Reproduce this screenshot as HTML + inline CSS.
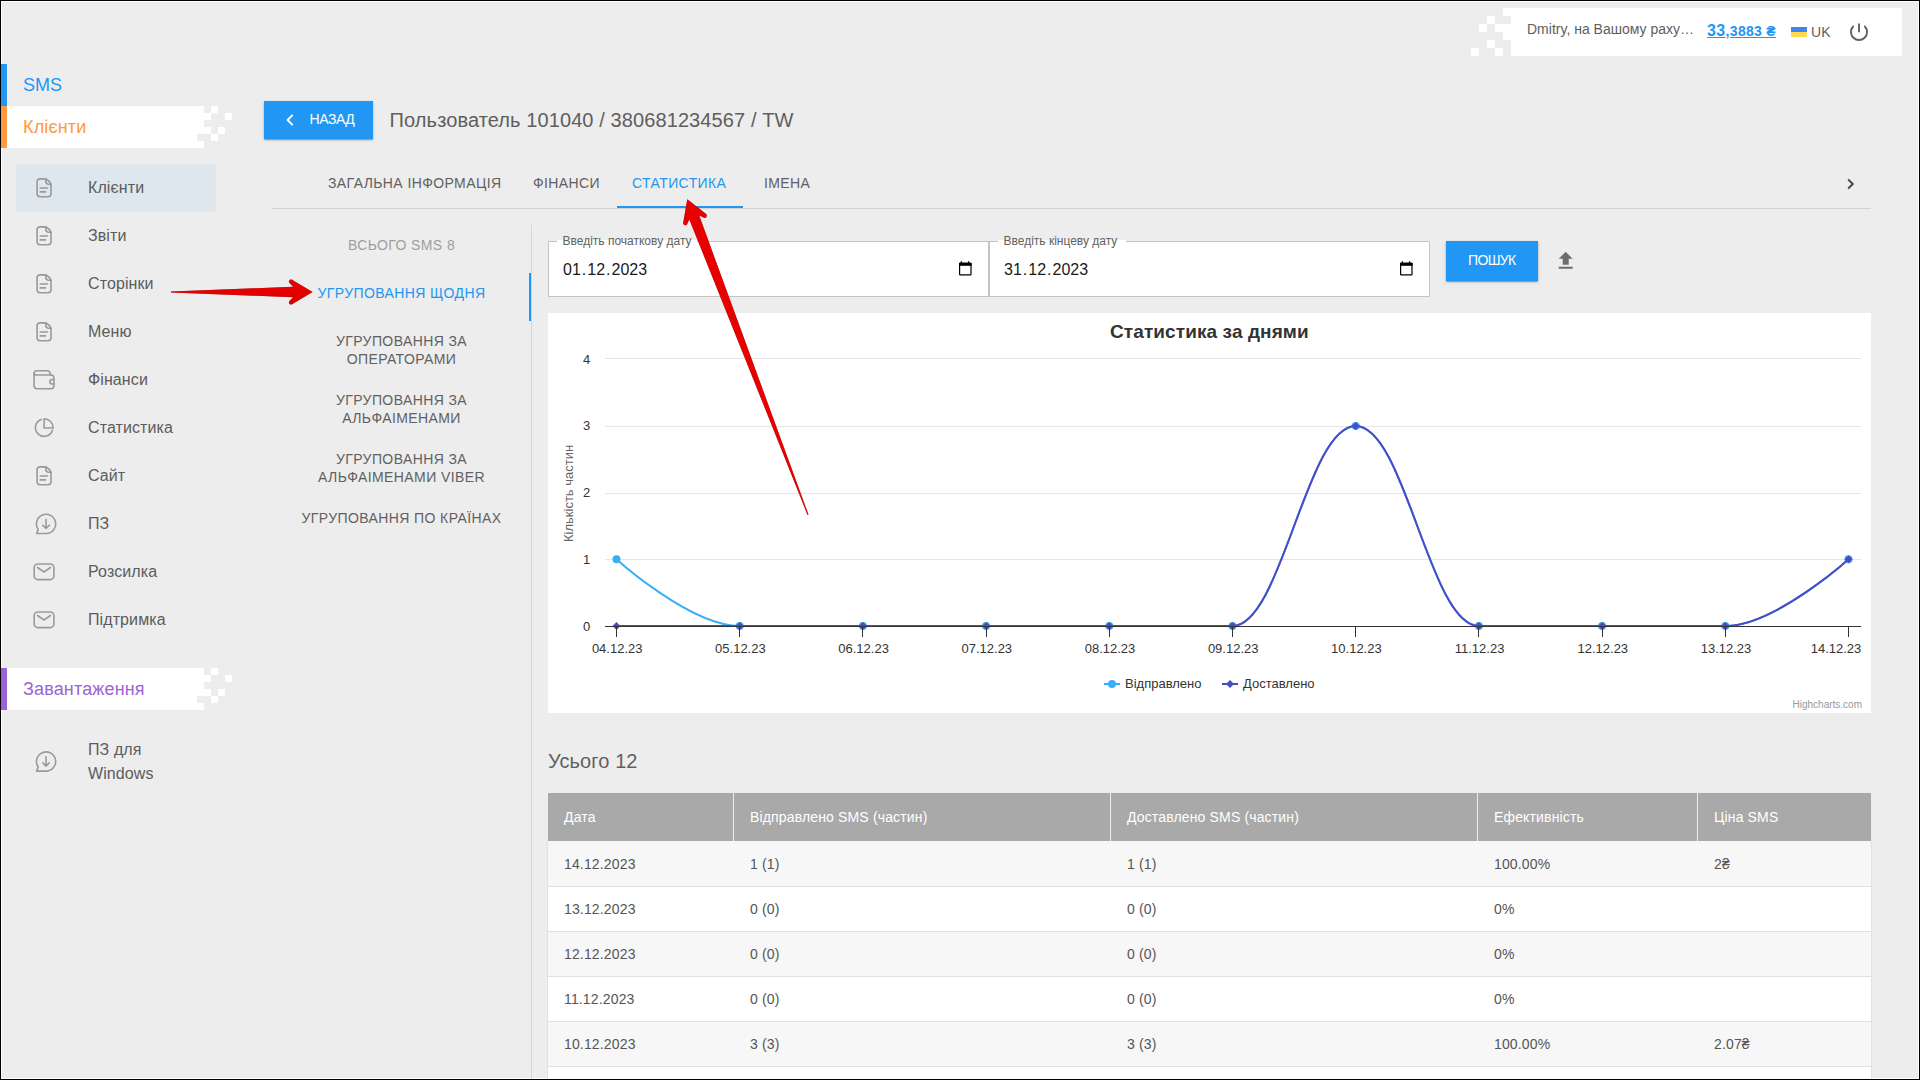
<!DOCTYPE html>
<html>
<head>
<meta charset="utf-8">
<style>
html,body{margin:0;padding:0;}
body{width:1920px;height:1080px;position:relative;overflow:hidden;background:#ededed;font-family:"Liberation Sans",sans-serif;color:#555;}
.a{position:absolute;}
.t{position:absolute;white-space:nowrap;line-height:1;}
#frame{position:absolute;left:0;top:0;width:1920px;height:1080px;box-sizing:border-box;border:1px solid #000;z-index:100;}
#wline{position:absolute;left:1px;top:1px;width:1918px;height:1078px;box-sizing:border-box;border:1px solid #fff;}
svg{position:absolute;overflow:visible;}
</style>
</head>
<body>
<div id="wline"></div>

<div class="a" style="left:1511px;top:8px;width:391px;height:48px;background:#fff;"></div>
<div class="a" style="left:1503px;top:8px;width:8px;height:8px;background:#fff;"></div>
<div class="a" style="left:1487px;top:16px;width:8px;height:8px;background:#fff;"></div>
<div class="a" style="left:1479px;top:24px;width:8px;height:8px;background:#fff;"></div>
<div class="a" style="left:1495px;top:24px;width:16px;height:8px;background:#fff;"></div>
<div class="a" style="left:1503px;top:32px;width:8px;height:8px;background:#fff;"></div>
<div class="a" style="left:1487px;top:40px;width:8px;height:8px;background:#fff;"></div>
<div class="a" style="left:1471px;top:48px;width:8px;height:8px;background:#fff;"></div>
<div class="a" style="left:1495px;top:48px;width:8px;height:8px;background:#fff;"></div>
<div class="t" style="left:1527px;top:22.15px;font-size:14px;color:#5e5e5e;">Dmitry, на Вашому раху…</div>
<div class="t" style="left:1707px;top:22.96px;color:#2196f3;font-weight:700;text-decoration:underline;"><span style="font-size:16px;letter-spacing:0.4px">33</span><span style="font-size:14px;letter-spacing:0.3px">,3883 ₴</span></div>
<div class="a" style="left:1791px;top:27px;width:16px;height:5px;background:#3f86f2;"></div>
<div class="a" style="left:1791px;top:32px;width:16px;height:5px;background:#ffd84c;"></div>
<div class="t" style="left:1811px;top:25.15px;font-size:14px;color:#5e5e5e;letter-spacing:0.2px;">UK</div>
<svg style="left:0;top:0" width="1920" height="80"><path d="M1853.1 26.5 A8.03 8.03 0 1 0 1864.9 26.5" fill="none" stroke="#616161" stroke-width="1.9" stroke-linecap="round"/><path d="M1859 24.2 V31.5" stroke="#616161" stroke-width="1.9" stroke-linecap="round"/></svg>
<div class="a" style="left:1px;top:64px;width:6px;height:42px;background:#2196f3;"></div>
<div class="t" style="left:23px;top:76.16px;font-size:18px;color:#2196f3;">SMS</div>
<div class="a" style="left:1px;top:106px;width:6px;height:42px;background:#ff9a40;"></div>
<div class="a" style="left:7px;top:106px;width:183px;height:42px;background:#fff;"></div>
<div class="a" style="left:190px;top:106px;width:14px;height:7px;background:#fff;"></div>
<div class="a" style="left:211px;top:106px;width:7px;height:7px;background:#fff;"></div>
<div class="a" style="left:190px;top:113px;width:21px;height:7px;background:#fff;"></div>
<div class="a" style="left:225px;top:113px;width:7px;height:7px;background:#fff;"></div>
<div class="a" style="left:190px;top:120px;width:14px;height:7px;background:#fff;"></div>
<div class="a" style="left:190px;top:127px;width:21px;height:7px;background:#fff;"></div>
<div class="a" style="left:218px;top:127px;width:7px;height:7px;background:#fff;"></div>
<div class="a" style="left:190px;top:134px;width:7px;height:7px;background:#fff;"></div>
<div class="a" style="left:211px;top:134px;width:7px;height:7px;background:#fff;"></div>
<div class="a" style="left:190px;top:141px;width:14px;height:7px;background:#fff;"></div>
<div class="t" style="left:23px;top:118.06px;font-size:18px;color:#ff9a40;letter-spacing:0.15px;">Клієнти</div>
<div class="a" style="left:16px;top:164px;width:200px;height:48px;background:#dfe7ee;"></div>
<div class="t" style="left:88px;top:179.66px;font-size:16px;color:#5c5c5c;letter-spacing:0.1px;">Клієнти</div>
<div class="t" style="left:88px;top:227.66px;font-size:16px;color:#5c5c5c;letter-spacing:0.1px;">Звіти</div>
<div class="t" style="left:88px;top:275.66px;font-size:16px;color:#5c5c5c;letter-spacing:0.1px;">Сторінки</div>
<div class="t" style="left:88px;top:323.66px;font-size:16px;color:#5c5c5c;letter-spacing:0.1px;">Меню</div>
<div class="t" style="left:88px;top:371.66px;font-size:16px;color:#5c5c5c;letter-spacing:0.1px;">Фінанси</div>
<div class="t" style="left:88px;top:419.66px;font-size:16px;color:#5c5c5c;letter-spacing:0.1px;">Статистика</div>
<div class="t" style="left:88px;top:467.66px;font-size:16px;color:#5c5c5c;letter-spacing:0.1px;">Сайт</div>
<div class="t" style="left:88px;top:515.66px;font-size:16px;color:#5c5c5c;letter-spacing:0.1px;">ПЗ</div>
<div class="t" style="left:88px;top:563.66px;font-size:16px;color:#5c5c5c;letter-spacing:0.1px;">Розсилка</div>
<div class="t" style="left:88px;top:611.66px;font-size:16px;color:#5c5c5c;letter-spacing:0.1px;">Підтримка</div>
<div class="a" style="left:1px;top:668px;width:6px;height:42px;background:#9c64d2;"></div>
<div class="a" style="left:7px;top:668px;width:183px;height:42px;background:#fff;"></div>
<div class="a" style="left:190px;top:668px;width:14px;height:7px;background:#fff;"></div>
<div class="a" style="left:211px;top:668px;width:7px;height:7px;background:#fff;"></div>
<div class="a" style="left:190px;top:675px;width:21px;height:7px;background:#fff;"></div>
<div class="a" style="left:225px;top:675px;width:7px;height:7px;background:#fff;"></div>
<div class="a" style="left:190px;top:682px;width:14px;height:7px;background:#fff;"></div>
<div class="a" style="left:190px;top:689px;width:21px;height:7px;background:#fff;"></div>
<div class="a" style="left:218px;top:689px;width:7px;height:7px;background:#fff;"></div>
<div class="a" style="left:190px;top:696px;width:7px;height:7px;background:#fff;"></div>
<div class="a" style="left:211px;top:696px;width:7px;height:7px;background:#fff;"></div>
<div class="a" style="left:190px;top:703px;width:14px;height:7px;background:#fff;"></div>
<div class="t" style="left:23px;top:680.06px;font-size:18px;color:#9c64d2;letter-spacing:0.15px;">Завантаження</div>
<div class="t" style="left:88px;top:742.26px;font-size:16px;color:#5c5c5c;letter-spacing:0.1px;">ПЗ для</div>
<div class="t" style="left:88px;top:766.26px;font-size:16px;color:#5c5c5c;letter-spacing:0.1px;">Windows</div>
<svg style="left:0;top:0" width="240" height="800"><g transform="translate(36 178)" fill="none" stroke="#9a9a9a" stroke-width="1.6" stroke-linecap="round" stroke-linejoin="round"><path d="M9.8 0.9 H4 Q1.1 0.9 1.1 3.8 V15.8 Q1.1 18.7 4 18.7 H12.1 Q15 18.7 15 15.8 V6.2 A9 9 0 0 0 9.8 0.9 Z"/><path d="M9.8 0.9 V3.2 A3 3 0 0 0 12.8 6.2 H15"/><path d="M4.3 10 H11.4 M4.3 13.9 H9.6"/></g><g transform="translate(36 226)" fill="none" stroke="#9a9a9a" stroke-width="1.6" stroke-linecap="round" stroke-linejoin="round"><path d="M9.8 0.9 H4 Q1.1 0.9 1.1 3.8 V15.8 Q1.1 18.7 4 18.7 H12.1 Q15 18.7 15 15.8 V6.2 A9 9 0 0 0 9.8 0.9 Z"/><path d="M9.8 0.9 V3.2 A3 3 0 0 0 12.8 6.2 H15"/><path d="M4.3 10 H11.4 M4.3 13.9 H9.6"/></g><g transform="translate(36 274)" fill="none" stroke="#9a9a9a" stroke-width="1.6" stroke-linecap="round" stroke-linejoin="round"><path d="M9.8 0.9 H4 Q1.1 0.9 1.1 3.8 V15.8 Q1.1 18.7 4 18.7 H12.1 Q15 18.7 15 15.8 V6.2 A9 9 0 0 0 9.8 0.9 Z"/><path d="M9.8 0.9 V3.2 A3 3 0 0 0 12.8 6.2 H15"/><path d="M4.3 10 H11.4 M4.3 13.9 H9.6"/></g><g transform="translate(36 322)" fill="none" stroke="#9a9a9a" stroke-width="1.6" stroke-linecap="round" stroke-linejoin="round"><path d="M9.8 0.9 H4 Q1.1 0.9 1.1 3.8 V15.8 Q1.1 18.7 4 18.7 H12.1 Q15 18.7 15 15.8 V6.2 A9 9 0 0 0 9.8 0.9 Z"/><path d="M9.8 0.9 V3.2 A3 3 0 0 0 12.8 6.2 H15"/><path d="M4.3 10 H11.4 M4.3 13.9 H9.6"/></g><g transform="translate(33 370)" fill="none" stroke="#9a9a9a" stroke-width="1.6" stroke-linecap="round" stroke-linejoin="round"><path d="M1.1 5.5 V3.6 Q1.1 0.8 3.9 0.8 H14.2 Q16.6 0.8 17.1 3.2 L17.4 5"/><path d="M1.1 4 V15.8 Q1.1 18.7 4 18.7 H18 Q20.9 18.7 20.9 15.8 V8 Q20.9 5 18 5 H3.6 Q1.1 5 1.1 3.5"/><path d="M20.9 9.6 H19 A2.2 2.2 0 0 0 19 14 H20.9"/></g><g transform="translate(34 418)" fill="none" stroke="#9a9a9a" stroke-width="1.6" stroke-linecap="round" stroke-linejoin="round"><path d="M7.3 1.4 A8.7 8.7 0 1 0 18.4 12.2"/><path d="M10.1 0.8 V10 H19.2 A9.2 9.2 0 0 0 10.1 0.8 Z"/></g><g transform="translate(36 466)" fill="none" stroke="#9a9a9a" stroke-width="1.6" stroke-linecap="round" stroke-linejoin="round"><path d="M9.8 0.9 H4 Q1.1 0.9 1.1 3.8 V15.8 Q1.1 18.7 4 18.7 H12.1 Q15 18.7 15 15.8 V6.2 A9 9 0 0 0 9.8 0.9 Z"/><path d="M9.8 0.9 V3.2 A3 3 0 0 0 12.8 6.2 H15"/><path d="M4.3 10 H11.4 M4.3 13.9 H9.6"/></g><g transform="translate(35.6 513.8)" fill="none" stroke="#9a9a9a" stroke-width="1.6" stroke-linecap="round" stroke-linejoin="round"><path d="M10.4 19.7 H1 L2.6 15.6 A9.6 9.6 0 1 1 10.4 19.7 Z"/><path d="M10.4 5.4 V14.6 M7.1 11.4 L10.4 14.7 L13.7 11.4"/></g><g transform="translate(33.4 563.2)" fill="none" stroke="#9a9a9a" stroke-width="1.6" stroke-linecap="round" stroke-linejoin="round"><rect x="0.8" y="0.8" width="19.7" height="15.6" rx="3.6"/><path d="M4.1 4.3 L10.6 8.8 L17.1 4.3"/></g><g transform="translate(33.4 611.2)" fill="none" stroke="#9a9a9a" stroke-width="1.6" stroke-linecap="round" stroke-linejoin="round"><rect x="0.8" y="0.8" width="19.7" height="15.6" rx="3.6"/><path d="M4.1 4.3 L10.6 8.8 L17.1 4.3"/></g><g transform="translate(35.6 751.4)" fill="none" stroke="#9a9a9a" stroke-width="1.6" stroke-linecap="round" stroke-linejoin="round"><path d="M10.4 19.7 H1 L2.6 15.6 A9.6 9.6 0 1 1 10.4 19.7 Z"/><path d="M10.4 5.4 V14.6 M7.1 11.4 L10.4 14.7 L13.7 11.4"/></g></svg>
<div class="a" style="left:264px;top:101px;width:109px;height:38px;background:#2196f3;box-shadow:0 1px 3px rgba(0,0,0,.2),0 1px 1px rgba(0,0,0,.14),0 2px 1px -1px rgba(0,0,0,.12);"></div>
<svg style="left:0;top:0" width="400" height="150"><path d="M292 115.5 L287.6 120 L292 124.5" fill="none" stroke="#fff" stroke-width="1.9" stroke-linecap="square"/></svg>
<div class="t" style="left:309.5px;top:112.15px;font-size:14px;color:#fff;letter-spacing:-0.45px;">НАЗАД</div>
<div class="t" style="left:389.6px;top:110.07px;font-size:20px;color:#5e5e5e;letter-spacing:0.1px;">Пользователь 101040 / 380681234567 / TW</div>
<div class="t" style="left:328px;top:176.15px;font-size:14px;color:#616161;letter-spacing:0.4px;">ЗАГАЛЬНА ІНФОРМАЦІЯ</div>
<div class="t" style="left:533px;top:176.15px;font-size:14px;color:#616161;letter-spacing:0.4px;">ФІНАНСИ</div>
<div class="t" style="left:632px;top:176.15px;font-size:14px;color:#2196f3;letter-spacing:0.4px;">СТАТИСТИКА</div>
<div class="t" style="left:764px;top:176.15px;font-size:14px;color:#616161;letter-spacing:0.4px;">ІМЕНА</div>
<div class="a" style="left:272px;top:208px;width:1599px;height:1px;background:#d3d3d3;"></div>
<div class="a" style="left:617px;top:206px;width:126px;height:2px;background:#2196f3;"></div>
<svg style="left:0;top:0" width="1900" height="220"><path d="M1848.9 180.2 L1852.8 184 L1848.9 187.8" fill="none" stroke="#444" stroke-width="1.9" stroke-linecap="square"/></svg>
<div class="a" style="left:531px;top:225px;width:1px;height:855px;background:#d6d6d6;"></div>
<div class="a" style="left:529px;top:273px;width:2px;height:48px;background:#2196f3;"></div>
<div class="t" style="left:201.50px;width:400px;text-align:center;top:238.15px;font-size:14px;color:#9e9e9e;letter-spacing:0.4px;">ВСЬОГО SMS 8</div>
<div class="t" style="left:201.50px;width:400px;text-align:center;top:286.15px;font-size:14px;color:#2196f3;letter-spacing:0.4px;">УГРУПОВАННЯ ЩОДНЯ</div>
<div class="t" style="left:201.50px;width:400px;text-align:center;top:333.85px;font-size:14px;color:#616161;letter-spacing:0.4px;">УГРУПОВАННЯ ЗА</div>
<div class="t" style="left:201.50px;width:400px;text-align:center;top:352.15px;font-size:14px;color:#616161;letter-spacing:0.4px;">ОПЕРАТОРАМИ</div>
<div class="t" style="left:201.50px;width:400px;text-align:center;top:393.15px;font-size:14px;color:#616161;letter-spacing:0.4px;">УГРУПОВАННЯ ЗА</div>
<div class="t" style="left:201.50px;width:400px;text-align:center;top:411.15px;font-size:14px;color:#616161;letter-spacing:0.4px;">АЛЬФАІМЕНАМИ</div>
<div class="t" style="left:201.50px;width:400px;text-align:center;top:452.35px;font-size:14px;color:#616161;letter-spacing:0.4px;">УГРУПОВАННЯ ЗА</div>
<div class="t" style="left:201.50px;width:400px;text-align:center;top:470.15px;font-size:14px;color:#616161;letter-spacing:0.4px;">АЛЬФАІМЕНАМИ VIBER</div>
<div class="t" style="left:201.50px;width:400px;text-align:center;top:511.15px;font-size:14px;color:#616161;letter-spacing:0.4px;">УГРУПОВАННЯ ПО КРАЇНАХ</div>
<div class="a" style="left:548px;top:241px;width:441px;height:56px;box-sizing:border-box;background:#fff;border:1px solid #c4c4c4;"></div>
<div class="a" style="left:557px;top:240px;width:140px;height:3px;background:#fff;"></div>
<div class="t" style="left:562.5px;top:234.84px;font-size:12px;color:#616161;">Введіть початкову дату</div>
<div class="t" style="left:562px;top:262.46px;font-size:16px;color:#1a1a1a;"><span style="padding:0 1px">01</span>.<span style="padding:0 1px">12</span>.<span style="padding:0 1px">2023</span></div>
<div class="a" style="left:989px;top:241px;width:441px;height:56px;box-sizing:border-box;background:#fff;border:1px solid #c4c4c4;"></div>
<div class="a" style="left:998px;top:240px;width:128px;height:3px;background:#fff;"></div>
<div class="t" style="left:1003.5px;top:234.84px;font-size:12px;color:#616161;">Введіть кінцеву дату</div>
<div class="t" style="left:1003px;top:262.46px;font-size:16px;color:#1a1a1a;"><span style="padding:0 1px">31</span>.<span style="padding:0 1px">12</span>.<span style="padding:0 1px">2023</span></div>
<svg style="left:0;top:0" width="1600" height="300"><g transform="translate(959 261)"><path d="M0.6 2.6 Q0.6 2 1.2 2 H11.4 Q12 2 12 2.6 V13.2 Q12 13.8 11.4 13.8 H1.2 Q0.6 13.8 0.6 13.2 Z" fill="none" stroke="#000" stroke-width="1.2"/><rect x="0" y="2" width="12.6" height="2.8" fill="#000"/><path d="M2.3 0.2 V2.4 M9.6 0.2 V2.4" stroke="#000" stroke-width="1.2"/></g><g transform="translate(1400 261)"><path d="M0.6 2.6 Q0.6 2 1.2 2 H11.4 Q12 2 12 2.6 V13.2 Q12 13.8 11.4 13.8 H1.2 Q0.6 13.8 0.6 13.2 Z" fill="none" stroke="#000" stroke-width="1.2"/><rect x="0" y="2" width="12.6" height="2.8" fill="#000"/><path d="M2.3 0.2 V2.4 M9.6 0.2 V2.4" stroke="#000" stroke-width="1.2"/></g><path transform="translate(1553.7 248.85)" d="M5 20h14v-2H5v2zm0-10h4v6h6v-6h4l-7-7-7 7z" fill="#6d6d6d"/></svg>
<div class="a" style="left:1446px;top:241px;width:92px;height:40px;background:#2196f3;box-shadow:0 1px 3px rgba(0,0,0,.2),0 1px 1px rgba(0,0,0,.14),0 2px 1px -1px rgba(0,0,0,.12);"></div>
<div class="t" style="left:1468px;top:253.15px;font-size:14px;color:#fff;letter-spacing:-0.65px;">ПОШУК</div>
<div class="a" style="left:548px;top:313px;width:1323px;height:400px;background:#fff;"></div>
<svg style="left:0;top:0" width="1920" height="1080"><rect x="605" y="358" width="1256" height="1" fill="#e6e6e6"/><rect x="605" y="426" width="1256" height="1" fill="#e6e6e6"/><rect x="605" y="493" width="1256" height="1" fill="#e6e6e6"/><rect x="605" y="559" width="1256" height="1" fill="#e6e6e6"/><path d="M 616.50 559.30 C 616.50 559.30 690.42 626.00 739.70 626.00 C 788.98 626.00 813.62 626.00 862.90 626.00 C 912.18 626.00 936.82 626.00 986.10 626.00 C 1035.38 626.00 1060.02 626.00 1109.30 626.00 C 1158.58 626.00 1183.22 626.00 1232.50 626.00 C 1281.78 626.00 1306.42 426.00 1355.70 426.00 C 1404.98 426.00 1429.62 626.00 1478.90 626.00 C 1528.18 626.00 1552.82 626.00 1602.10 626.00 C 1651.38 626.00 1676.02 626.00 1725.30 626.00 C 1774.58 626.00 1848.50 559.30 1848.50 559.30" fill="none" stroke="#3aaef8" stroke-width="2" stroke-linejoin="round" stroke-linecap="round"/><circle cx="616.50" cy="559.30" r="4" fill="#3aaef8"/><circle cx="739.70" cy="626.00" r="4" fill="#3aaef8"/><circle cx="862.90" cy="626.00" r="4" fill="#3aaef8"/><circle cx="986.10" cy="626.00" r="4" fill="#3aaef8"/><circle cx="1109.30" cy="626.00" r="4" fill="#3aaef8"/><circle cx="1232.50" cy="626.00" r="4" fill="#3aaef8"/><circle cx="1355.70" cy="426.00" r="4" fill="#3aaef8"/><circle cx="1478.90" cy="626.00" r="4" fill="#3aaef8"/><circle cx="1602.10" cy="626.00" r="4" fill="#3aaef8"/><circle cx="1725.30" cy="626.00" r="4" fill="#3aaef8"/><circle cx="1848.50" cy="559.30" r="4" fill="#3aaef8"/><path d="M 616.50 626.00 C 616.50 626.00 690.42 626.00 739.70 626.00 C 788.98 626.00 813.62 626.00 862.90 626.00 C 912.18 626.00 936.82 626.00 986.10 626.00 C 1035.38 626.00 1060.02 626.00 1109.30 626.00 C 1158.58 626.00 1183.22 626.00 1232.50 626.00 C 1281.78 626.00 1306.42 426.00 1355.70 426.00 C 1404.98 426.00 1429.62 626.00 1478.90 626.00 C 1528.18 626.00 1552.82 626.00 1602.10 626.00 C 1651.38 626.00 1676.02 626.00 1725.30 626.00 C 1774.58 626.00 1848.50 559.30 1848.50 559.30" fill="none" stroke="#4b4bc5" stroke-width="2" stroke-linejoin="round" stroke-linecap="round"/><path d="M616.50 622.00 L620.50 626.00 L616.50 630.00 L612.50 626.00 Z" fill="#4b4bc5"/><path d="M739.70 622.00 L743.70 626.00 L739.70 630.00 L735.70 626.00 Z" fill="#4b4bc5"/><path d="M862.90 622.00 L866.90 626.00 L862.90 630.00 L858.90 626.00 Z" fill="#4b4bc5"/><path d="M986.10 622.00 L990.10 626.00 L986.10 630.00 L982.10 626.00 Z" fill="#4b4bc5"/><path d="M1109.30 622.00 L1113.30 626.00 L1109.30 630.00 L1105.30 626.00 Z" fill="#4b4bc5"/><path d="M1232.50 622.00 L1236.50 626.00 L1232.50 630.00 L1228.50 626.00 Z" fill="#4b4bc5"/><path d="M1355.70 422.00 L1359.70 426.00 L1355.70 430.00 L1351.70 426.00 Z" fill="#4b4bc5"/><path d="M1478.90 622.00 L1482.90 626.00 L1478.90 630.00 L1474.90 626.00 Z" fill="#4b4bc5"/><path d="M1602.10 622.00 L1606.10 626.00 L1602.10 630.00 L1598.10 626.00 Z" fill="#4b4bc5"/><path d="M1725.30 622.00 L1729.30 626.00 L1725.30 630.00 L1721.30 626.00 Z" fill="#4b4bc5"/><path d="M1848.50 555.30 L1852.50 559.30 L1848.50 563.30 L1844.50 559.30 Z" fill="#4b4bc5"/><rect x="605" y="626" width="1256" height="1" fill="#333"/><rect x="616" y="627" width="1" height="10" fill="#333"/><rect x="739" y="627" width="1" height="10" fill="#333"/><rect x="862" y="627" width="1" height="10" fill="#333"/><rect x="986" y="627" width="1" height="10" fill="#333"/><rect x="1109" y="627" width="1" height="10" fill="#333"/><rect x="1232" y="627" width="1" height="10" fill="#333"/><rect x="1355" y="627" width="1" height="10" fill="#333"/><rect x="1478" y="627" width="1" height="10" fill="#333"/><rect x="1602" y="627" width="1" height="10" fill="#333"/><rect x="1725" y="627" width="1" height="10" fill="#333"/><rect x="1848" y="627" width="1" height="10" fill="#333"/><rect x="1104" y="683" width="16" height="2" fill="#3aaef8"/><circle cx="1112" cy="684" r="4" fill="#3aaef8"/><rect x="1222" y="683" width="16" height="2" fill="#4b4bc5"/><path d="M1230 680 L1234 684 L1230 688 L1226 684 Z" fill="#4b4bc5"/></svg>
<div class="t" style="left:1110px;top:321.92px;font-size:19px;color:#333;font-weight:700;letter-spacing:0.1px;">Статистика за днями</div>
<div class="t" style="left:583px;top:352.50px;font-size:13px;color:#333;">4</div>
<div class="t" style="left:583px;top:418.60px;font-size:13px;color:#333;">3</div>
<div class="t" style="left:583px;top:486.00px;font-size:13px;color:#333;">2</div>
<div class="t" style="left:583px;top:552.80px;font-size:13px;color:#333;">1</div>
<div class="t" style="left:583px;top:620.00px;font-size:13px;color:#333;">0</div>
<div class="t" style="left:577.20px;width:80px;text-align:center;top:642.00px;font-size:13px;color:#333;">04.12.23</div>
<div class="t" style="left:700.40px;width:80px;text-align:center;top:642.00px;font-size:13px;color:#333;">05.12.23</div>
<div class="t" style="left:823.60px;width:80px;text-align:center;top:642.00px;font-size:13px;color:#333;">06.12.23</div>
<div class="t" style="left:946.80px;width:80px;text-align:center;top:642.00px;font-size:13px;color:#333;">07.12.23</div>
<div class="t" style="left:1070.00px;width:80px;text-align:center;top:642.00px;font-size:13px;color:#333;">08.12.23</div>
<div class="t" style="left:1193.20px;width:80px;text-align:center;top:642.00px;font-size:13px;color:#333;">09.12.23</div>
<div class="t" style="left:1316.40px;width:80px;text-align:center;top:642.00px;font-size:13px;color:#333;">10.12.23</div>
<div class="t" style="left:1439.60px;width:80px;text-align:center;top:642.00px;font-size:13px;color:#333;">11.12.23</div>
<div class="t" style="left:1562.80px;width:80px;text-align:center;top:642.00px;font-size:13px;color:#333;">12.12.23</div>
<div class="t" style="left:1686.00px;width:80px;text-align:center;top:642.00px;font-size:13px;color:#333;">13.12.23</div>
<div class="t" style="left:1796.00px;width:80px;text-align:center;top:642.00px;font-size:13px;color:#333;">14.12.23</div>
<div class="t" style="left:561.50px;top:541.50px;font-size:13px;color:#666;transform:rotate(-90deg);transform-origin:0 0;">Кількість частин</div>
<div class="t" style="left:1125px;top:677.00px;font-size:13px;color:#333;">Відправлено</div>
<div class="t" style="left:1243px;top:677.00px;font-size:13px;color:#333;">Доставлено</div>
<div class="t" style="left:1792.5px;top:699.53px;font-size:10px;color:#999;">Highcharts.com</div>
<div class="t" style="left:548px;top:751.47px;font-size:20px;color:#616161;letter-spacing:0.1px;">Усього 12</div>
<div class="a" style="left:548px;top:793px;width:1323px;height:48px;background:#a9a9a9;"></div>
<div class="a" style="left:733px;top:793px;width:1px;height:48px;background:#eeeeee;"></div>
<div class="a" style="left:1110px;top:793px;width:1px;height:48px;background:#eeeeee;"></div>
<div class="a" style="left:1477px;top:793px;width:1px;height:48px;background:#eeeeee;"></div>
<div class="a" style="left:1697px;top:793px;width:1px;height:48px;background:#eeeeee;"></div>
<div class="t" style="left:564px;top:810.45px;font-size:14px;color:#fff;letter-spacing:0.15px;">Дата</div>
<div class="t" style="left:750px;top:810.45px;font-size:14px;color:#fff;letter-spacing:0.15px;">Відправлено SMS (частин)</div>
<div class="t" style="left:1127px;top:810.45px;font-size:14px;color:#fff;letter-spacing:0.15px;">Доставлено SMS (частин)</div>
<div class="t" style="left:1494px;top:810.45px;font-size:14px;color:#fff;letter-spacing:0.15px;">Ефективність</div>
<div class="t" style="left:1714px;top:810.45px;font-size:14px;color:#fff;letter-spacing:0.15px;">Ціна SMS</div>
<div class="a" style="left:548px;top:841px;width:1323px;height:45px;background:#f7f7f7;"></div>
<div class="a" style="left:548px;top:886px;width:1323px;height:1px;background:#e0e0e0;"></div>
<div class="t" style="left:564px;top:857.15px;font-size:14px;color:#555;letter-spacing:0.15px;">14.12.2023</div>
<div class="t" style="left:750px;top:857.15px;font-size:14px;color:#555;letter-spacing:0.15px;">1 (1)</div>
<div class="t" style="left:1127px;top:857.15px;font-size:14px;color:#555;letter-spacing:0.15px;">1 (1)</div>
<div class="t" style="left:1494px;top:857.15px;font-size:14px;color:#555;letter-spacing:0.15px;">100.00%</div>
<div class="t" style="left:1714px;top:857.15px;font-size:14px;color:#555;letter-spacing:0.15px;">2₴</div>
<div class="a" style="left:548px;top:887px;width:1323px;height:44px;background:#fff;"></div>
<div class="a" style="left:548px;top:931px;width:1323px;height:1px;background:#e0e0e0;"></div>
<div class="t" style="left:564px;top:902.15px;font-size:14px;color:#555;letter-spacing:0.15px;">13.12.2023</div>
<div class="t" style="left:750px;top:902.15px;font-size:14px;color:#555;letter-spacing:0.15px;">0 (0)</div>
<div class="t" style="left:1127px;top:902.15px;font-size:14px;color:#555;letter-spacing:0.15px;">0 (0)</div>
<div class="t" style="left:1494px;top:902.15px;font-size:14px;color:#555;letter-spacing:0.15px;">0%</div>
<div class="t" style="left:1714px;top:902.15px;font-size:14px;color:#555;letter-spacing:0.15px;"></div>
<div class="a" style="left:548px;top:932px;width:1323px;height:44px;background:#f7f7f7;"></div>
<div class="a" style="left:548px;top:976px;width:1323px;height:1px;background:#e0e0e0;"></div>
<div class="t" style="left:564px;top:947.15px;font-size:14px;color:#555;letter-spacing:0.15px;">12.12.2023</div>
<div class="t" style="left:750px;top:947.15px;font-size:14px;color:#555;letter-spacing:0.15px;">0 (0)</div>
<div class="t" style="left:1127px;top:947.15px;font-size:14px;color:#555;letter-spacing:0.15px;">0 (0)</div>
<div class="t" style="left:1494px;top:947.15px;font-size:14px;color:#555;letter-spacing:0.15px;">0%</div>
<div class="t" style="left:1714px;top:947.15px;font-size:14px;color:#555;letter-spacing:0.15px;"></div>
<div class="a" style="left:548px;top:977px;width:1323px;height:44px;background:#fff;"></div>
<div class="a" style="left:548px;top:1021px;width:1323px;height:1px;background:#e0e0e0;"></div>
<div class="t" style="left:564px;top:992.15px;font-size:14px;color:#555;letter-spacing:0.15px;">11.12.2023</div>
<div class="t" style="left:750px;top:992.15px;font-size:14px;color:#555;letter-spacing:0.15px;">0 (0)</div>
<div class="t" style="left:1127px;top:992.15px;font-size:14px;color:#555;letter-spacing:0.15px;">0 (0)</div>
<div class="t" style="left:1494px;top:992.15px;font-size:14px;color:#555;letter-spacing:0.15px;">0%</div>
<div class="t" style="left:1714px;top:992.15px;font-size:14px;color:#555;letter-spacing:0.15px;"></div>
<div class="a" style="left:548px;top:1022px;width:1323px;height:44px;background:#f7f7f7;"></div>
<div class="a" style="left:548px;top:1066px;width:1323px;height:1px;background:#e0e0e0;"></div>
<div class="t" style="left:564px;top:1037.15px;font-size:14px;color:#555;letter-spacing:0.15px;">10.12.2023</div>
<div class="t" style="left:750px;top:1037.15px;font-size:14px;color:#555;letter-spacing:0.15px;">3 (3)</div>
<div class="t" style="left:1127px;top:1037.15px;font-size:14px;color:#555;letter-spacing:0.15px;">3 (3)</div>
<div class="t" style="left:1494px;top:1037.15px;font-size:14px;color:#555;letter-spacing:0.15px;">100.00%</div>
<div class="t" style="left:1714px;top:1037.15px;font-size:14px;color:#555;letter-spacing:0.15px;">2.07₴</div>
<div class="a" style="left:548px;top:1067px;width:1323px;height:44px;background:#fff;"></div>
<div class="a" style="left:548px;top:1111px;width:1323px;height:1px;background:#e0e0e0;"></div>
<div class="t" style="left:564px;top:1082.15px;font-size:14px;color:#555;letter-spacing:0.15px;">09.12.2023</div>
<div class="t" style="left:750px;top:1082.15px;font-size:14px;color:#555;letter-spacing:0.15px;">0 (0)</div>
<div class="t" style="left:1127px;top:1082.15px;font-size:14px;color:#555;letter-spacing:0.15px;">0 (0)</div>
<div class="t" style="left:1494px;top:1082.15px;font-size:14px;color:#555;letter-spacing:0.15px;">0%</div>
<div class="t" style="left:1714px;top:1082.15px;font-size:14px;color:#555;letter-spacing:0.15px;"></div>
<div class="a" style="left:547px;top:841px;width:1px;height:239px;background:#e2e2e2;"></div>
<div class="a" style="left:1871px;top:841px;width:1px;height:239px;background:#e2e2e2;"></div>
<svg style="left:0;top:0;z-index:50;filter:drop-shadow(0.6px 0.8px 0.7px rgba(0,0,0,.45));" width="1920" height="1080"><defs><linearGradient id="rg" x1="0" y1="0" x2="0" y2="1"><stop offset="0" stop-color="#f00000"/><stop offset="1" stop-color="#d40000"/></linearGradient></defs><path d="M171.00 291.50 L293.10 286.70 L289.06 282.52 L288.92 282.01 L288.91 281.49 L289.02 280.97 L289.26 280.50 L289.60 280.09 L290.02 279.78 L290.51 279.58 L291.03 279.50 L291.55 279.55 L292.05 279.72 L312.60 292.00 L292.05 304.28 L291.55 304.45 L291.03 304.50 L290.51 304.42 L290.02 304.22 L289.60 303.91 L289.26 303.50 L289.02 303.03 L288.91 302.51 L288.92 301.99 L289.06 301.48 L293.10 297.30 L171.00 292.50 Z" fill="url(#rg)"/><path d="M807.53 514.88 L689.32 219.41 L686.86 224.67 L686.43 224.98 L685.95 225.18 L685.43 225.26 L684.90 225.21 L684.40 225.04 L683.96 224.75 L683.60 224.37 L683.34 223.92 L683.19 223.41 L683.17 222.88 L687.30 199.30 L706.12 214.10 L706.45 214.51 L706.68 214.98 L706.79 215.50 L706.78 216.02 L706.64 216.53 L706.38 216.99 L706.03 217.38 L705.59 217.67 L705.09 217.84 L704.57 217.90 L699.22 215.62 L808.47 514.52 Z" fill="#e60000"/></svg>
<div id="frame"></div>
</body></html>
